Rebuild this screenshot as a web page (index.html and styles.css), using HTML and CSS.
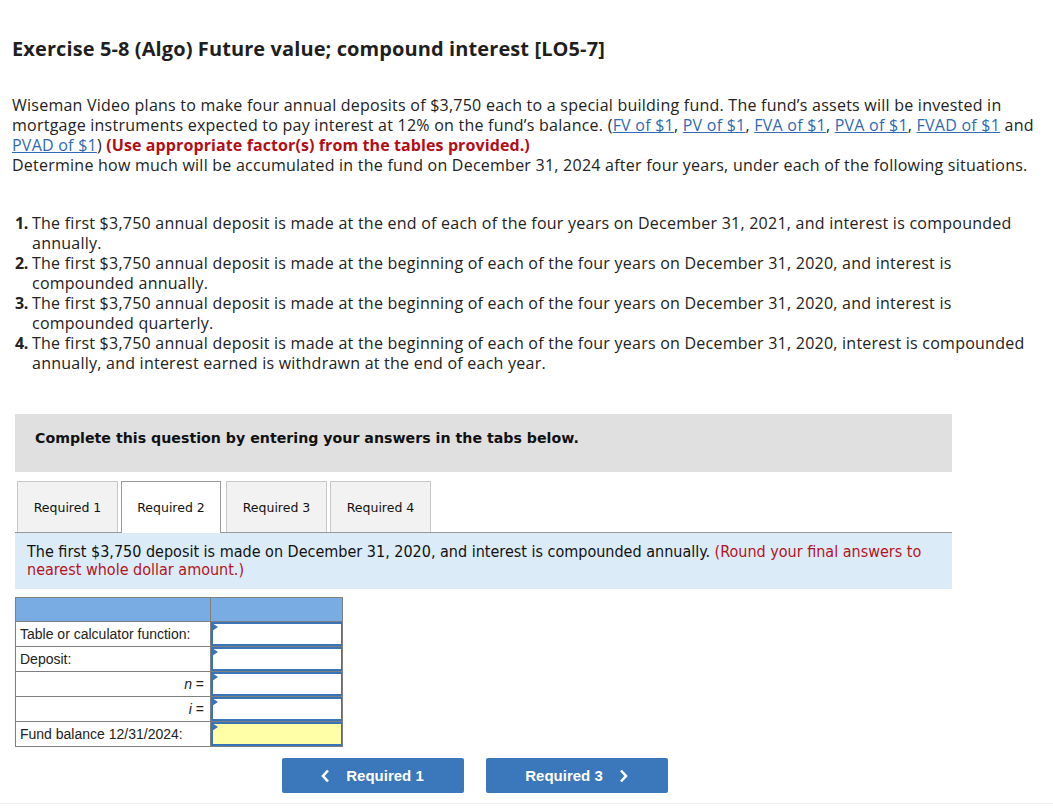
FILE: index.html
```html
<!DOCTYPE html>
<html>
<head>
<meta charset="utf-8">
<link rel="stylesheet" href="styles.css">
</head>
<body>
<div class="page">
  <h1 class="title">Exercise 5-8 (Algo) Future value; compound interest [LO5-7]</h1>
  <p class="intro">Wiseman Video plans to make four annual deposits of $3,750 each to a special building fund. The fund’s assets will be invested in mortgage instruments expected to pay interest at 12% on the fund’s balance. (<a href="#">FV of $1</a>, <a href="#">PV of $1</a>, <a href="#">FVA of $1</a>, <a href="#">PVA of $1</a>, <a href="#">FVAD of $1</a> and <a href="#">PVAD of $1</a>) <strong class="red">(Use appropriate factor(s) from the tables provided.)</strong><br>Determine how much will be accumulated in the fund on December 31, 2024 after four years, under each of the following situations.</p>
  <ol class="sits">
    <li><span class="num">1.</span><span>The first $3,750 annual deposit is made at the end of each of the four years on December 31, 2021, and interest is compounded annually.</span></li>
    <li><span class="num">2.</span><span>The first $3,750 annual deposit is made at the beginning of each of the four years on December 31, 2020, and interest is compounded annually.</span></li>
    <li><span class="num">3.</span><span>The first $3,750 annual deposit is made at the beginning of each of the four years on December 31, 2020, and interest is compounded quarterly.</span></li>
    <li><span class="num">4.</span><span>The first $3,750 annual deposit is made at the beginning of each of the four years on December 31, 2020, interest is compounded annually, and interest earned is withdrawn at the end of each year.</span></li>
  </ol>
  <div class="panel">
    <div class="notice">Complete this question by entering your answers in the tabs below.</div>
    <div class="tabs">
      <div class="tab">Required 1</div>
      <div class="tab active">Required 2</div>
      <div class="tab">Required 3</div>
      <div class="tab">Required 4</div>
    </div>
    <div class="instr">The first $3,750 deposit is made on December 31, 2020, and interest is compounded annually. <span class="hint">(Round your final answers to nearest whole dollar amount.)</span></div>
    <table class="grid">
      <tr class="head"><th></th><th></th></tr>
      <tr><td class="lbl">Table or calculator function:</td><td class="in"><div class="box"></div></td></tr>
      <tr><td class="lbl">Deposit:</td><td class="in"><div class="box"></div></td></tr>
      <tr><td class="lbl r"><i>n</i> =</td><td class="in"><div class="box"></div></td></tr>
      <tr><td class="lbl r"><i>i</i> =</td><td class="in"><div class="box"></div></td></tr>
      <tr><td class="lbl">Fund balance 12/31/2024:</td><td class="in"><div class="box yellow"></div></td></tr>
    </table>
    <div class="nav">
      <button class="btn"><svg class="chev" width="9" height="14" viewBox="0 0 9 14"><polyline points="7,1.5 2,7 7,12.5" fill="none" stroke="#fff" stroke-width="2.6"/></svg>Required 1</button>
      <button class="btn">Required 3<svg class="chev right" width="9" height="14" viewBox="0 0 9 14"><polyline points="2,1.5 7,7 2,12.5" fill="none" stroke="#fff" stroke-width="2.6"/></svg></button>
    </div>
  </div>
  <div class="foot"></div>
</div>
</body>
</html>
```
FILE: styles.css
```css
html, body { margin: 0; padding: 0; background: #fff; }
.page { padding: 0 4px 0 12px; font-family: "Open Sans", "Liberation Sans", sans-serif; color: #222; }
.title { margin: 0; padding-top: 36px; font-size: 20px; font-weight: 700; line-height: 26px; color: #1f1f1f; letter-spacing: 0.1px; }
.intro { margin: 33px 0 0; font-size: 16px; line-height: 20px; letter-spacing: 0.24px; }
.intro a { color: #2f6ab4; text-decoration: underline; }
.red { color: #b30d16; font-weight: 700; letter-spacing: 0.1px; }
.sits { list-style: none; margin: 38px 0 0; padding: 0; font-size: 16px; line-height: 20px; letter-spacing: 0.24px; }
.sits li { display: flex; }
.num { font-weight: 700; width: 20px; box-sizing: border-box; padding-right: 4px; text-align: right; flex: none; letter-spacing: -0.4px; }
.panel { margin: 0 0 0 3px; width: 937px; padding-top: 41px; }
.notice { background: #e0e0e0; height: 58px; box-sizing: border-box; padding: 16px 20px 0; font-family: "DejaVu Sans", Verdana, sans-serif; font-weight: 700; font-size: 14.2px; color: #111; }
.tabs { display: flex; margin-top: 9px; padding-left: 2px; border-bottom: 1px solid #999; height: 51px; }
.tab { height: 51px; box-sizing: border-box; border: 1px solid #c8c8c8; border-bottom: none; background: #f2f2f2; padding: 0 10px; display: flex; align-items: center; font-family: "DejaVu Sans", Verdana, sans-serif; font-size: 12.5px; color: #111; margin-right: 3px; width: 101px; justify-content: center; }
.tab.active { background: #fff; border-color: #999; height: 52px; margin-bottom: -1px; width: 100px; margin-right: 5px; }
.instr { background: #dcebf8; height: 56px; box-sizing: border-box; padding: 10px 12px 0; font-family: "DejaVu Sans Condensed", "DejaVu Sans", sans-serif; font-size: 16px; line-height: 18px; color: #111; }
.hint { color: #b3141c; }
.grid { border-collapse: collapse; margin-top: 8px; font-family: "Liberation Sans", Arial, sans-serif; font-size: 14px; color: #222; }
.grid td, .grid th { border: 1px solid #7f7f7f; padding: 0; }
.grid .head th { background: #79ace3; height: 23px; }
.grid .head th:first-child { width: 194px; }
.grid .head th:last-child { width: 131px; }
.lbl { height: 24px; padding: 0 4px !important; }
.lbl.r { text-align: right; padding-right: 6px !important; }
.in { padding: 0 !important; position: relative; }
.box { height: 20px; border: 2px solid #3a74b8; border-right-width: 1px; background: #fff; position: relative; margin: 0; }
.box::before { content: ""; position: absolute; left: -1px; top: -1px; border-left: 6px solid #3a74b8; border-top: 4px solid transparent; border-bottom: 4px solid transparent; }
.box.yellow { background: #ffffa8; }
.nav { display: flex; justify-content: center; gap: 22px; margin-top: 11px; padding-right: 18px; }
.btn { width: 182px; height: 35px; background: #3a77bb; color: #fff; border: none; border-radius: 2px; font-family: "Liberation Sans", Arial, sans-serif; font-weight: 700; font-size: 15px; display: flex; align-items: center; justify-content: center; padding: 0; }
.chev { margin-right: 16px; flex: none; }
.chev.right { margin-right: 0; margin-left: 16px; }
.foot { margin-top: 10px; border-top: 1px solid #eee; margin-left: -12px; margin-right: -4px; }
```
